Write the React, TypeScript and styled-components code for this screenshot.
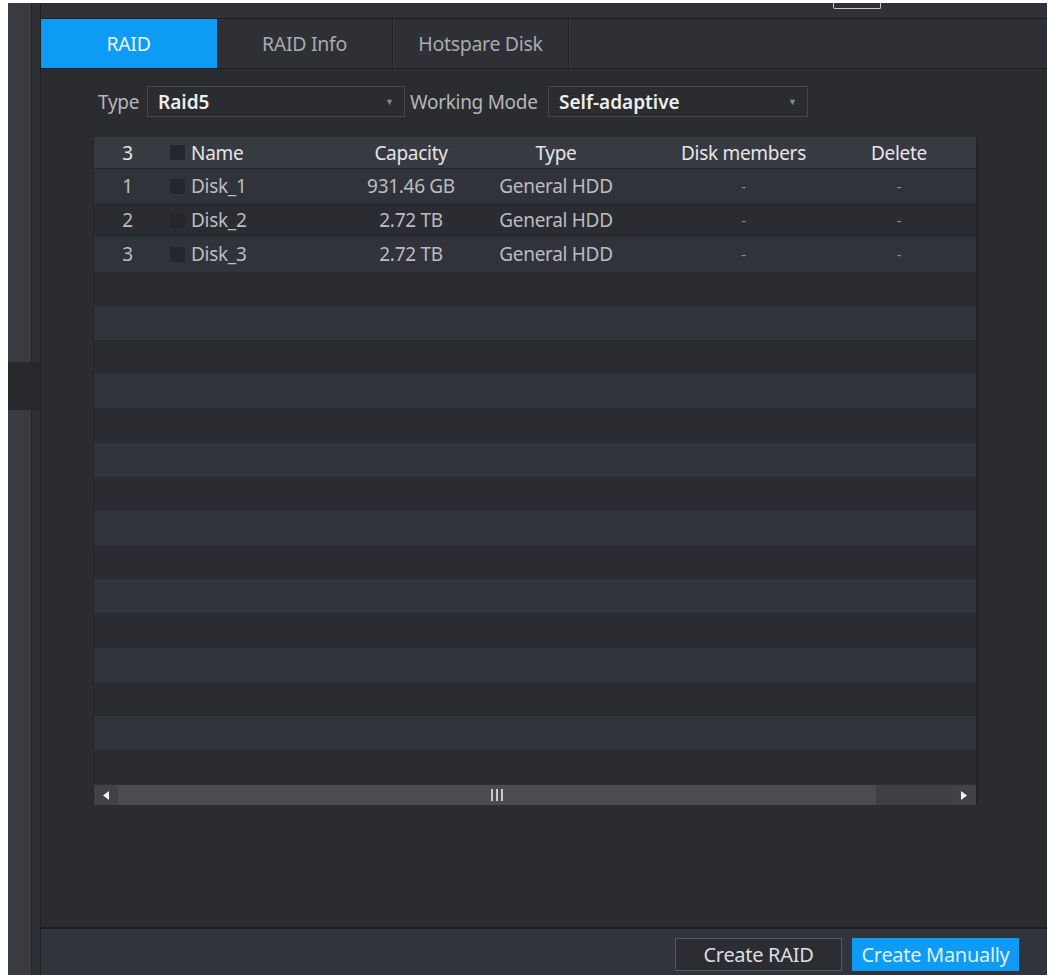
import React from "react";
import styled, { createGlobalStyle } from "styled-components";

const GlobalStyle = createGlobalStyle`
  html, body { margin: 0; padding: 0; background: #ffffff; }
  body { font-family: "Noto Sans", "Open Sans", sans-serif; }
  * { box-sizing: border-box; }
`;

const Page = styled.div`
  width: 1051px;
  height: 978px;
  padding: 3px 4px 3px 8px;
  background: #ffffff;
  display: flex;
`;

const Sidebar = styled.div`
  width: 32px;
  display: flex;
  flex-direction: column;
  background: #393b40;
  border-right: 8px solid #2d2f34;
  box-shadow: inset -1px 0 0 #222428;
`;

const SideBand = styled.div<{ $h: number; $dark?: boolean }>`
  height: ${(p) => p.$h}px;
  flex: ${(p) => (p.$h === 0 ? 1 : "none")};
  background: ${(p) => (p.$dark ? "#26282c" : "transparent")};
  margin-right: -8px;
`;

const Main = styled.div`
  flex: 1;
  display: flex;
  flex-direction: column;
  background: #2a2c30;
  border-left: 1px solid #1f2125;
`;

const TopStrip = styled.div`
  height: 16px;
  background: #303238;
  border-bottom: 1px solid #1b1d21;
  padding-left: 792px;
  display: flex;
  align-items: flex-start;
`;

const TopNub = styled.div`
  width: 48px;
  height: 6px;
  border: 1px solid #c8c9cc;
  border-top: none;
  border-radius: 0 0 2px 2px;
`;

const TabBar = styled.div`
  height: 50px;
  display: flex;
  background: #2e3036;
  border-bottom: 1px solid #1b1d21;
`;

const Tab = styled.div<{ $active?: boolean }>`
  width: 176px;
  display: flex;
  align-items: center;
  justify-content: center;
  font-size: 19.5px;
  letter-spacing: -0.3px;
  color: ${(p) => (p.$active ? "#eaf5ff" : "#a8aaae")};
  background: ${(p) => (p.$active ? "#0e9bf3" : "transparent")};
  border-right: 1px solid ${(p) => (p.$active ? "#0e9bf3" : "#1f2125")};
  box-shadow: ${(p) => (p.$active ? "none" : "1px 0 0 #383a40")};
`;

const Content = styled.div`
  flex: 1;
  padding: 17px 0 0 52px;
  display: flex;
  flex-direction: column;
`;

const FilterRow = styled.div`
  height: 31px;
  display: flex;
  align-items: center;
`;

const Label = styled.span<{ $w: number }>`
  width: ${(p) => p.$w}px;
  font-size: 19px;
  color: #b4b6ba;
  letter-spacing: -0.3px;
  padding-left: 5px;
  white-space: nowrap;
`;

const Select = styled.div<{ $w: number }>`
  width: ${(p) => p.$w}px;
  height: 31px;
  border: 1px solid #46484e;
  background: #2a2c30;
  display: flex;
  align-items: center;
  justify-content: space-between;
  padding: 0 10px 0 10px;
  font-size: 19px;
  font-weight: 600;
  color: #eeeeee;
`;

const Caret = styled.span`
  font-size: 9px;
  color: #85878c;
  font-weight: 400;
`;

const Table = styled.div`
  margin-top: 20px;
  width: 885px;
  display: flex;
  flex-direction: column;
  border-left: 1px solid #24262a;
  border-right: 2px solid #22242a;
`;

const cols = "67px 180px 140px 150px 225px 86px 1fr";

const HeaderRow = styled.div`
  height: 32px;
  display: grid;
  grid-template-columns: ${cols};
  align-items: center;
  background: #383a41;
  border-bottom: 1px solid #24262b;
  font-size: 19px;
  color: #e4e5e7;
`;

const Row = styled.div<{ $odd: boolean }>`
  height: 34.2px;
  display: grid;
  grid-template-columns: ${cols};
  align-items: center;
  background: ${(p) => (p.$odd ? "#31333b" : "#2a2c31")};
  font-size: 19px;
  color: #bbbcbf;
`;

const Cell = styled.div<{ $left?: boolean }>`
  display: flex;
  align-items: center;
  justify-content: ${(p) => (p.$left ? "flex-start" : "center")};
  white-space: nowrap;
  letter-spacing: -0.3px;
`;

const Check = styled.span`
  width: 15px;
  height: 15px;
  background: #25272c;
  margin: 0 6px 0 9px;
  flex: none;
`;

const Dash = styled.span`
  color: #8c8e93;
  font-size: 15px;
`;

const ScrollBar = styled.div`
  height: 21px;
  display: flex;
  align-items: center;
  background: #404247;
  border-top: 1px solid #2f3136;
`;

const Arrow = styled.div`
  width: 24px;
  height: 100%;
  display: flex;
  align-items: center;
  justify-content: center;
`;

const Thumb = styled.div`
  width: 758px;
  height: 100%;
  background: #4a4c51;
  display: flex;
  align-items: center;
  justify-content: center;
`;

const Track = styled.div`
  flex: 1;
  height: 100%;
  background: #3e4045;
`;

const Footer = styled.div`
  height: 48px;
  background: #32343b;
  border-top: 2px solid #1c1e22;
  display: flex;
  align-items: center;
  justify-content: flex-end;
  gap: 10px;
  padding: 5px 28px 0 0;
`;

const Button = styled.div<{ $primary?: boolean }>`
  width: 167px;
  height: 33px;
  display: flex;
  align-items: center;
  justify-content: center;
  font-size: 20px;
  letter-spacing: -0.3px;
  color: ${(p) => (p.$primary ? "#dff0ff" : "#dcdde0")};
  background: ${(p) => (p.$primary ? "#0e9bf3" : "#2b2d32")};
  border: 1px solid ${(p) => (p.$primary ? "#0e9bf3" : "#55575d")};
`;

const disks = [
  { n: 1, name: "Disk_1", cap: "931.46 GB" },
  { n: 2, name: "Disk_2", cap: "2.72 TB" },
  { n: 3, name: "Disk_3", cap: "2.72 TB" },
];

export default function App() {
  const rows = Array.from({ length: 18 }, (_, i) => i);
  return (
    <>
      <GlobalStyle />
      <Page>
        <Sidebar>
          <SideBand $h={359} />
          <SideBand $h={48} $dark />
          <SideBand $h={0} />
        </Sidebar>
        <Main>
          <TopStrip>
            <TopNub />
          </TopStrip>
          <TabBar>
            <Tab $active>RAID</Tab>
            <Tab>RAID Info</Tab>
            <Tab>Hotspare Disk</Tab>
          </TabBar>
          <Content>
            <FilterRow>
              <Label $w={54}>Type</Label>
              <Select $w={258}>
                Raid5
                <Caret>▼</Caret>
              </Select>
              <Label $w={143}>Working Mode</Label>
              <Select $w={260}>
                Self-adaptive
                <Caret>▼</Caret>
              </Select>
            </FilterRow>
            <Table>
              <HeaderRow>
                <Cell>3</Cell>
                <Cell $left>
                  <Check />
                  Name
                </Cell>
                <Cell>Capacity</Cell>
                <Cell>Type</Cell>
                <Cell>Disk members</Cell>
                <Cell>Delete</Cell>
                <Cell />
              </HeaderRow>
              {rows.map((i) => {
                const d = disks[i];
                return (
                  <Row key={i} $odd={i % 2 === 0}>
                    {d ? (
                      <>
                        <Cell>{d.n}</Cell>
                        <Cell $left>
                          <Check />
                          {d.name}
                        </Cell>
                        <Cell>{d.cap}</Cell>
                        <Cell>General HDD</Cell>
                        <Cell>
                          <Dash>-</Dash>
                        </Cell>
                        <Cell>
                          <Dash>-</Dash>
                        </Cell>
                        <Cell />
                      </>
                    ) : null}
                  </Row>
                );
              })}
              <ScrollBar>
                <Arrow>
                  <svg width="6" height="9" viewBox="0 0 6 9">
                    <path d="M6 0 L0 4.5 L6 9 Z" fill="#f2f2f2" />
                  </svg>
                </Arrow>
                <Thumb>
                  <svg width="14" height="14" viewBox="0 0 14 14">
                    <path d="M2 1v12M7 1v12M12 1v12" stroke="#e8e8e8" strokeWidth="1.6" />
                  </svg>
                </Thumb>
                <Track />
                <Arrow>
                  <svg width="6" height="9" viewBox="0 0 6 9">
                    <path d="M0 0 L6 4.5 L0 9 Z" fill="#f2f2f2" />
                  </svg>
                </Arrow>
              </ScrollBar>
            </Table>
          </Content>
          <Footer>
            <Button>Create RAID</Button>
            <Button $primary>Create Manually</Button>
          </Footer>
        </Main>
      </Page>
    </>
  );
}
